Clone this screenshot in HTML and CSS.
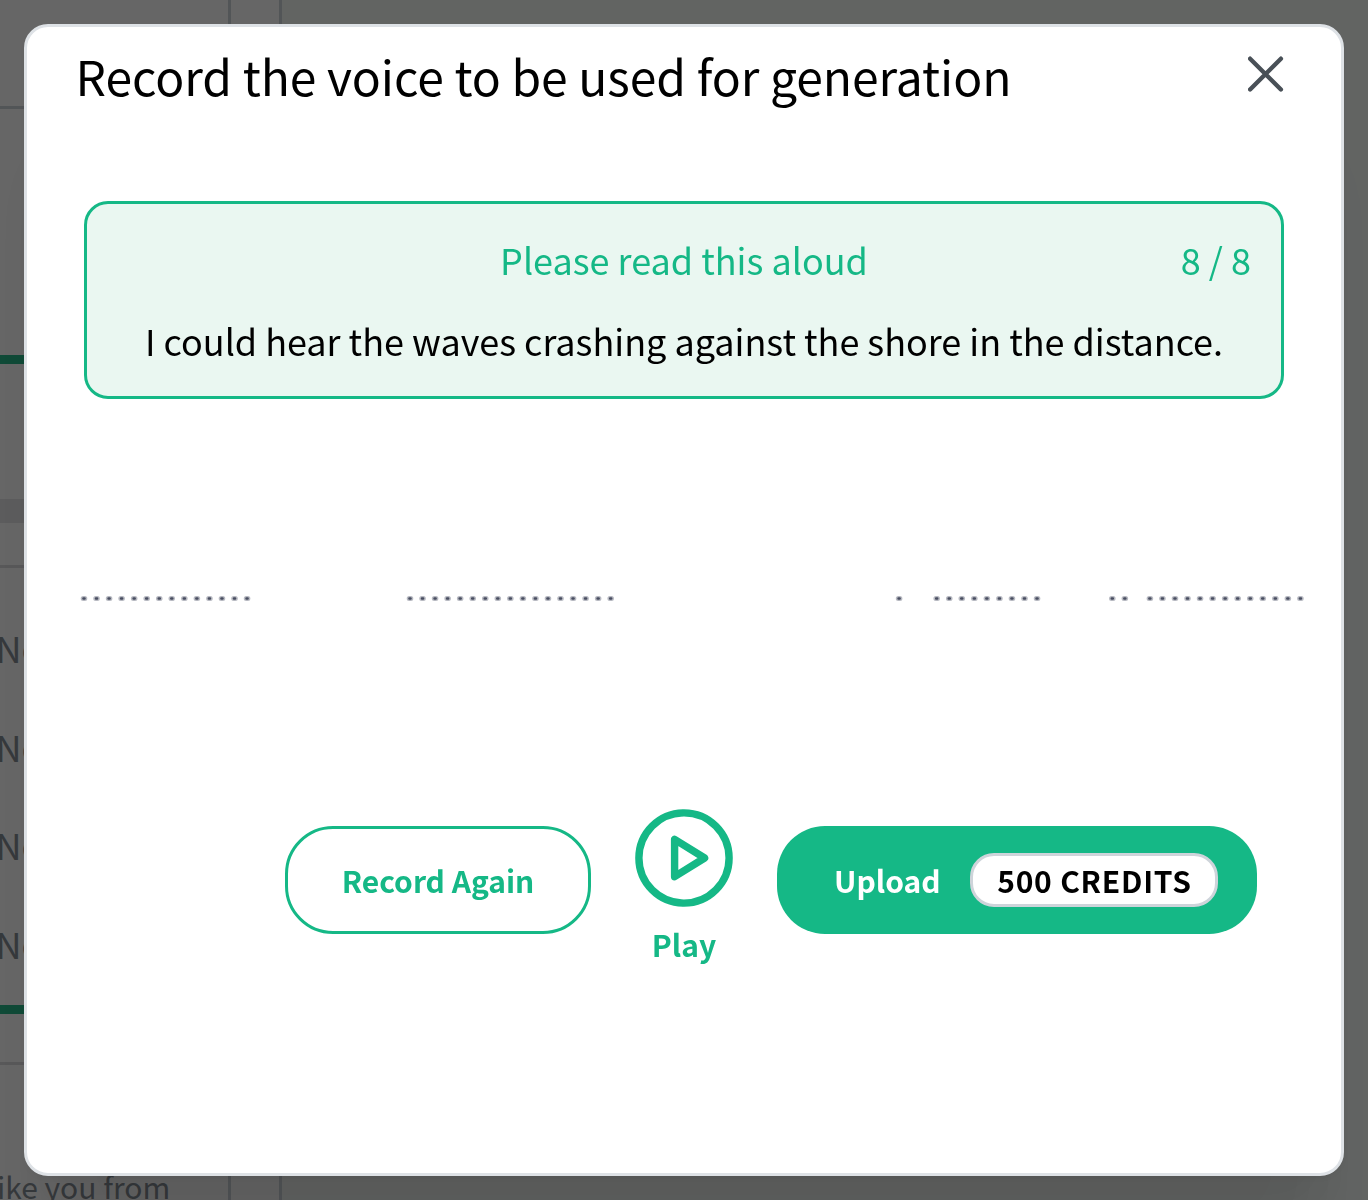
FILE: index.html
```html
<!DOCTYPE html>
<html lang="en">
<head>
    <meta charset="UTF-8">
    <meta name="viewport" content="width=device-width, initial-scale=1.0">
    <title>Record voice</title>
    <link rel="stylesheet" href="styles.css">
</head>
<body>
    <div class="page">
        <div class="sidebar">
            <div class="sidebar-head"></div>
            <div class="panel">
                <div class="panel-top"></div>
                <div class="panel-band"></div>
                <div class="panel-gap"></div>
                <ul class="voice-list">
                    <li>No</li>
                    <li>No</li>
                    <li>No</li>
                    <li>No</li>
                </ul>
            </div>
            <div class="sidebar-foot"></div>
            <p class="note">ike you from</p>
        </div>
        <div class="gutter"></div>
        <div class="main"></div>
    </div>

    <div class="overlay">
        <div class="modal">
            <div class="modal-header">
                <h1>Record the voice to be used for generation</h1>
                <button class="close" aria-label="Close">
                    <svg width="36" height="36" viewBox="0 0 36 36">
                        <path d="M2.1 2.7 32.9 33.5M32.9 2.7 2.1 33.5"/>
                    </svg>
                </button>
            </div>

            <div class="prompt">
                <div class="prompt-head">
                    <span class="prompt-title">Please read this aloud</span>
                    <span class="prompt-count">8 / 8</span>
                </div>
                <p class="prompt-text">I could hear the waves crashing against the shore in the distance.</p>
            </div>

            <svg class="wave" width="1240" height="12" viewBox="0 0 1240 12">
                <path class="wave-halo" d="M6.2 6.5H172M332.2 6.5H536M821.3 6.5h3M858.9 6.5H963M1034.5 6.5h16M1072.1 6.5H1226"/>
                <path class="wave-dot" d="M6.5 6.5H172M332.5 6.5H536M821.6 6.5h3M859.2 6.5H963M1034.8 6.5h16M1072.4 6.5H1226"/>
            </svg>

            <div class="actions">
                <button class="btn btn-outline">Record Again</button>
                <button class="play">
                    <svg width="98" height="98" viewBox="0 0 98 98">
                        <circle cx="49" cy="49" r="45.1"/>
                        <path d="M39.6 30.3v37.4L69.6 49z"/>
                    </svg>
                    <span>Play</span>
                </button>
                <button class="btn btn-filled">Upload <span class="badge">500 CREDITS</span></button>
            </div>
        </div>
    </div>
</body>
</html>
```

FILE: styles.css
```css
* {
    box-sizing: border-box;
}
body {
    margin: 0;
    height: 1200px;
    overflow: hidden;
    font-family: "Noto Sans CJK JP", "Noto Sans", sans-serif;
    color: #000;
}
h1, p, ul {
    margin: 0;
    padding: 0;
    font-weight: 400;
}
button {
    font-family: inherit;
    background: none;
    border: none;
    padding: 0;
    cursor: pointer;
}

/* page behind the dialog */
.page {
    display: flex;
    height: 1200px;
    background-color: #fff;
    color: #868e96;
}
.sidebar {
    width: 231px;
    border-right: 3px solid #ced4da;
}
.sidebar-head {
    height: 109px;
    margin-bottom: 246px;
    border-bottom: 3px solid #ced4da;
}
.panel {
    height: 659px;
    border-top: 9px solid #27b98a;
    border-bottom: 9px solid #27b98a;
}
.panel-top {
    height: 135px;
}
.panel-band {
    height: 24px;
    background-color: #e6e6e8;
}
.panel-gap {
    height: 45px;
    border-bottom: 3px solid #dcdcdf;
}
.voice-list {
    list-style: none;
    padding-top: 30px;
    font-size: 36px;
    line-height: 98.7px;
    margin-left: -4.5px;
}
.sidebar-foot {
    height: 51px;
    border-bottom: 3px solid #dcdcdf;
}
.note {
    margin: 97px 0 0 -3px;
    font-size: 30px;
    line-height: 48px;
    white-space: nowrap;
}
.gutter {
    width: 51px;
    border-right: 3px solid #ced4da;
}
.main {
    flex: 1;
    background-color: #f5faf6;
}

.overlay {
    position: fixed;
    top: 0;
    left: 0;
    width: 100%;
    height: 1200px;
    padding: 24px;
    background-color: rgba(0, 0, 0, 0.6);
}
.modal {
    height: 1152px;
    background-color: #fff;
    border: 3px solid #dee2e6;
    border-radius: 24px;
    box-shadow: 0 3px 9px rgba(0, 0, 0, 0.05), 0 108px 84px -21px rgba(0, 0, 0, 0.07), 0 51px 51px -21px rgba(0, 0, 0, 0.06);
}
.modal-header {
    display: flex;
    justify-content: space-between;
    height: 174px;
    padding: 12px 57px 0 48.5px;
}
.modal-header h1 {
    font-size: 48px;
    line-height: 72px;
    letter-spacing: -0.06px;
}
.close {
    height: 36px;
    margin-top: 17px;
}
.close svg {
    display: block;
    fill: none;
    stroke: #495057;
    stroke-width: 4.4;
    stroke-linecap: round;
}

.prompt {
    height: 198px;
    margin: 0 57px;
    padding: 28px 30px 0;
    border: 3px solid #15b886;
    border-radius: 24px;
    background-color: #eaf7f1;
    font-size: 36px;
    line-height: 54px;
    text-align: center;
}
.prompt-head {
    display: grid;
    grid-template-columns: 1fr auto 1fr;
    margin-bottom: 27px;
    color: #15b886;
}
.prompt-title {
    grid-column: 2;
}
.prompt-count {
    text-align: right;
}
.prompt-text {
    white-space: nowrap;
    letter-spacing: -0.02px;
}

.wave {
    display: block;
    margin: 193px 0 0 50px;
    fill: none;
    stroke: #343a4f;
    stroke-linecap: round;
}
.wave-halo {
    stroke-width: 5;
    stroke-dasharray: 1.6 10.943;
    opacity: 0.35;
}
.wave-dot {
    stroke-width: 2.6;
    stroke-dasharray: 1 11.543;
    opacity: 0.85;
}

.actions {
    display: flex;
    margin: 205px 0 0 258px;
}
.btn {
    height: 108px;
    margin-top: 16.5px;
    border-radius: 48px;
    font-size: 30px;
    font-weight: 600;
}
.btn-outline {
    width: 306px;
    border: 3px solid #15b886;
    color: #15b886;
}
.play {
    display: flex;
    flex-direction: column;
    align-items: center;
    width: 98px;
    margin: 0 44px;
    font-size: 30px;
    font-weight: 600;
    line-height: 48px;
    color: #15b886;
}
.play svg {
    display: block;
    margin-bottom: 13px;
    fill: none;
    stroke: #15b886;
    stroke-width: 7.4;
    stroke-linejoin: round;
}
.btn-filled {
    display: flex;
    align-items: center;
    justify-content: space-between;
    width: 480px;
    padding: 0 39px 0 57px;
    background-color: #15b886;
    color: #fff;
}
.badge {
    width: 248px;
    height: 54px;
    padding-left: 1px;
    border: 3px solid #ced4da;
    border-radius: 24px;
    background-color: #fff;
    color: #000;
    line-height: 48px;
    letter-spacing: 0.75px;
}
```
